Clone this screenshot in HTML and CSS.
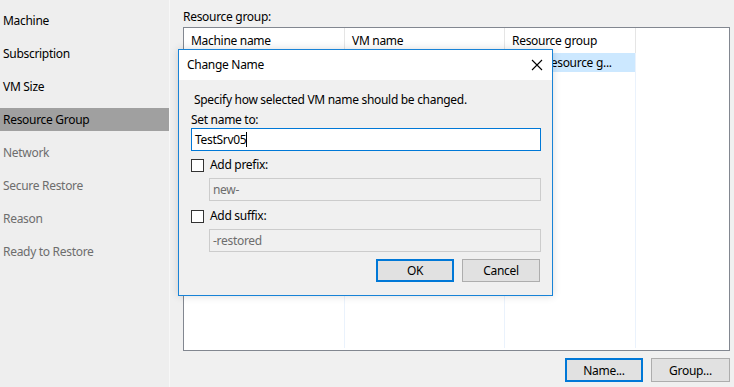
FILE: index.html
```html
<!DOCTYPE html>
<html lang="en">
<head>
  <meta charset="UTF-8" />
  <title>Restore - Resource Group</title>
  <link rel="stylesheet" href="styles.css">
</head>
<body>

  <div class="wizard">
    <!-- Pasos del asistente -->
    <nav class="steps">
      <div class="step">Machine</div>
      <div class="step">Subscription</div>
      <div class="step">VM Size</div>
      <div class="step active">Resource Group</div>
      <div class="step disabled">Network</div>
      <div class="step disabled">Secure Restore</div>
      <div class="step disabled">Reason</div>
      <div class="step disabled">Ready to Restore</div>
    </nav>

    <main class="content">
      <div class="field-label">Resource group:</div>
      <div class="list">
        <div class="list-col col-machine">
          <div class="list-head">Machine name</div>
          <div class="list-body">
            <div class="cell selected"></div>
          </div>
        </div>
        <div class="list-col col-vm">
          <div class="list-head">VM name</div>
          <div class="list-body">
            <div class="cell selected"></div>
          </div>
        </div>
        <div class="list-col col-group">
          <div class="list-head">Resource group</div>
          <div class="list-body">
            <div class="cell selected">Select resource g...</div>
          </div>
        </div>
        <div class="list-col col-filler">
          <div class="list-head"></div>
          <div class="list-body"></div>
        </div>
      </div>
      <div class="actions">
        <button class="btn btn-default">Name...</button>
        <button class="btn">Group...</button>
      </div>
    </main>

    <!-- Dialogo Change Name -->
    <div class="dialog">
      <div class="dialog-title">
        <span>Change Name</span>
        <svg class="close" width="12" height="12" viewBox="0 0 12 12">
          <path d="M1 1 L11 11 M11 1 L1 11" stroke="#000" stroke-width="1.1" fill="none"/>
        </svg>
      </div>
      <div class="dialog-body">
        <p class="hint">Specify how selected VM name should be changed.</p>
        <label class="lbl">Set name to:</label>
        <div class="textbox focused">TestSrv05<span class="caret"></span></div>
        <div class="check-row">
          <span class="check"></span>
          <span>Add prefix:</span>
        </div>
        <div class="textbox disabled indent">new-</div>
        <div class="check-row">
          <span class="check"></span>
          <span>Add suffix:</span>
        </div>
        <div class="textbox disabled indent">-restored</div>
        <div class="dialog-actions">
          <button class="btn btn-default">OK</button>
          <button class="btn">Cancel</button>
        </div>
      </div>
    </div>
  </div>

</body>
</html>
```

FILE: styles.css
```css
:root {
  --fondo: #f0f0f0;
  --blanco: #fff;
  --texto: #000;
  --texto-gris: #6d6d6d;
  --acento: #0078d7;
  --borde-dialogo: #1883d7;
  --borde-lista: #828790;
  --seleccion: #cce8ff;
  --fuente-base: "Noto Sans", "Open Sans", sans-serif;
}
* { box-sizing: border-box; margin: 0; padding: 0; }
body {
  font-family: var(--fuente-base);
  font-size: 12px;
  line-height: 16px;
  letter-spacing: -0.3px;
  color: var(--texto);
  background: var(--fondo);
  width: 734px;
  height: 387px;
  overflow: hidden;
}

.wizard {
  position: relative;
  display: flex;
  height: 387px;
}

/* Pasos */
.steps {
  width: 170px;
  flex-shrink: 0;
  padding-top: 9px;
  background: #eeeeee;
  border-right: 1px solid #f7f7f7;
  display: flex;
  flex-direction: column;
  gap: 10px;
}
.step {
  height: 23px;
  line-height: 23px;
  padding-left: 3px;
}
.step.active { background: #a0a0a0; }
.step.disabled { color: var(--texto-gris); }

/* Contenido */
.content {
  flex: 1;
  padding: 9px 4px 0 13px;
}
.field-label {
  height: 16px;
  margin-bottom: 2px;
}
.list {
  height: 324px;
  background: var(--blanco);
  border: 1px solid var(--borde-lista);
  display: flex;
}
.list-col {
  display: flex;
  flex-direction: column;
}
.col-machine { width: 161px; }
.col-vm { width: 160px; }
.col-group { width: 131px; }
.col-filler { flex: 1; }
.list-head {
  height: 25px;
  line-height: 25px;
  padding-left: 7px;
  border-right: 1px solid #e5e5e5;
}
.list-body {
  flex: 1;
  margin-bottom: 2px;
  border-right: 1px solid #eaf2fc;
}
.col-filler .list-head,
.col-filler .list-body { border-right: none; }
.cell {
  height: 19px;
  line-height: 19px;
  padding-left: 7px;
  white-space: nowrap;
  overflow: hidden;
}
.cell.selected { background: var(--seleccion); }

.actions {
  display: flex;
  justify-content: flex-end;
  gap: 8px;
  margin-top: 7px;
}

.btn {
  font-family: var(--fuente-base);
  font-size: 12px;
  letter-spacing: -0.3px;
  width: 78px;
  height: 24px;
  background: #e1e1e1;
  border: 1px solid #adadad;
  color: var(--texto);
}
.btn-default { border: 2px solid var(--acento); }
.actions .btn:last-child { width: 79px; }

/* Dialogo */
.dialog {
  position: absolute;
  left: 178px;
  top: 49px;
  width: 375px;
  height: 247px;
  border: 1px solid var(--borde-dialogo);
  background: var(--fondo);
  box-shadow: 0 0 8px rgba(0,0,0,0.15);
}
.dialog-title {
  height: 30px;
  background: var(--blanco);
  display: flex;
  align-items: center;
  justify-content: space-between;
  padding: 0 9px 0 8px;
}
.close { display: block; }
.dialog-body {
  padding: 12px 11px 0 12px;
  display: flex;
  flex-direction: column;
}
.hint { padding-left: 3px; }
.lbl { margin-top: 4px; }
.textbox {
  height: 23px;
  line-height: 21px;
  padding-left: 3px;
  border: 1px solid #7a7a7a;
  background: var(--blanco);
  white-space: nowrap;
}
.textbox.focused { border-color: var(--acento); }
.caret {
  display: inline-block;
  width: 1px;
  height: 15px;
  background: #000;
  vertical-align: -3px;
}
.textbox.disabled {
  background: var(--fondo);
  border-color: #cccccc;
  color: var(--texto-gris);
}
.indent {
  margin-left: 18px;
  margin-top: 5px;
}
.check-row {
  display: flex;
  align-items: center;
  gap: 6px;
  margin-top: 6px;
}
.check-row + .textbox + .check-row { margin-top: 7px; }
.check {
  width: 13px;
  height: 13px;
  border: 1px solid #333;
  background: var(--blanco);
}
.dialog-actions {
  display: flex;
  justify-content: flex-end;
  gap: 8px;
  margin-top: 7px;
  padding-right: 1px;
}
.dialog-actions .btn { height: 23px; }
```
